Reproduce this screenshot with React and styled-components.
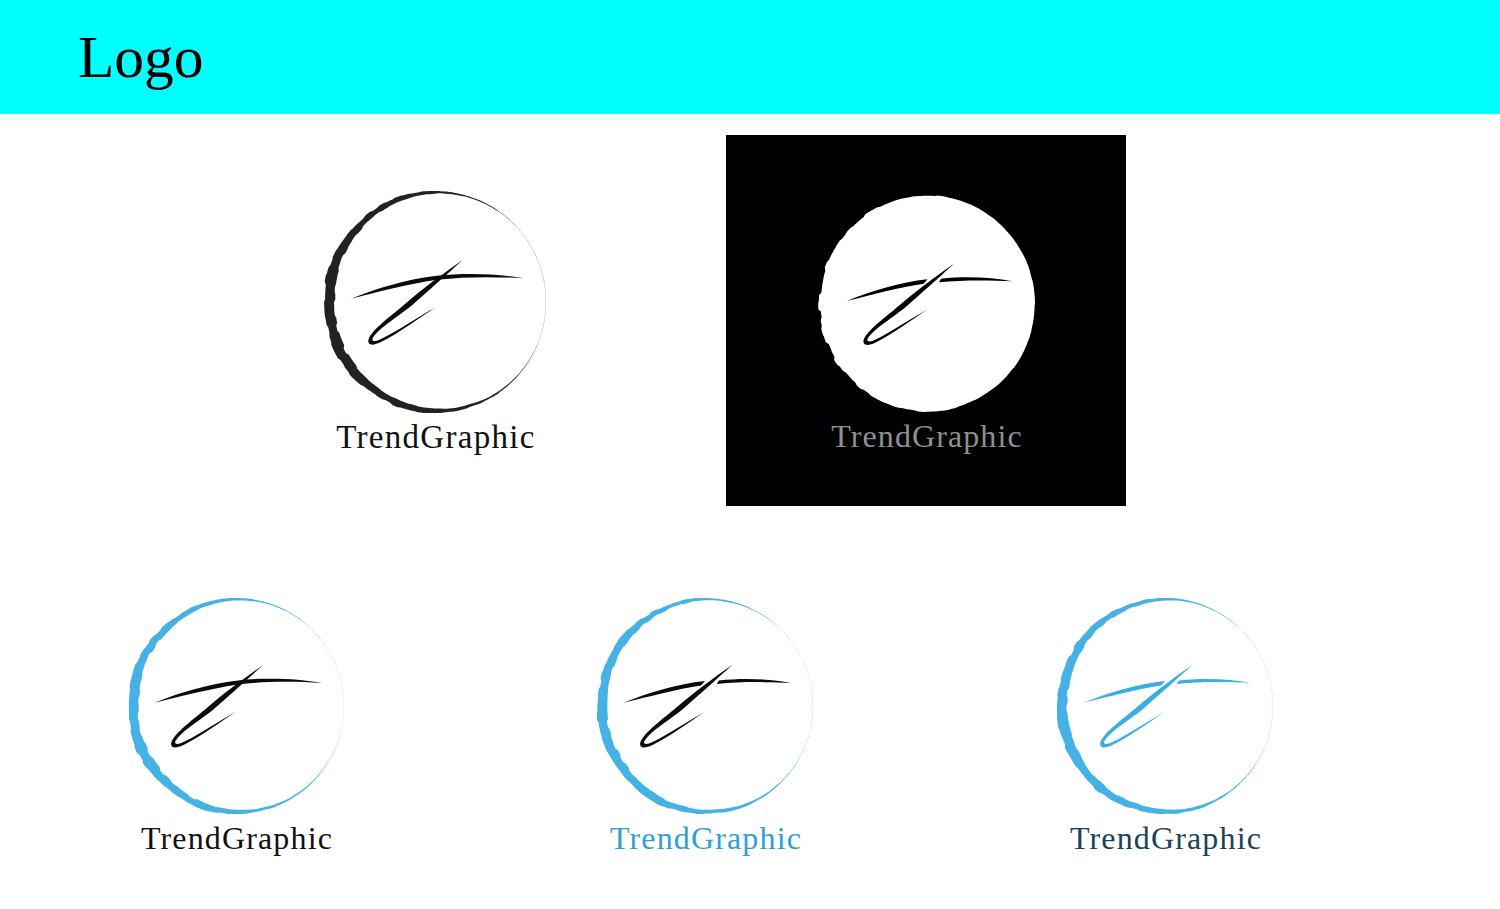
import React from 'react';
import styled, { createGlobalStyle } from 'styled-components';

const GlobalStyle = createGlobalStyle`
  html, body {
    margin: 0;
    padding: 0;
    background: #fff;
  }
`;

const Page = styled.div`
  width: 1500px;
  height: 909px;
  overflow: hidden;
  background: #fff;
`;

const Header = styled.header`
  height: 114px;
  padding-left: 78px;
  background: #00ffff;
  display: flex;
  align-items: center;
`;

const Title = styled.h1`
  margin: 2px 0 0;
  font-family: "Liberation Serif", serif;
  font-weight: 400;
  font-size: 59.5px;
  line-height: 1;
  color: #000;
`;

const TopRow = styled.section`
  display: flex;
  align-items: flex-start;
  padding: 21px 0 0 324px;
`;

const BlackPanel = styled.div`
  width: 400px;
  height: 371px;
  margin-left: 180px;
  padding-top: 60px;
  box-sizing: border-box;
  background: #000;
  display: flex;
  justify-content: center;
`;

const TopLogo = styled.div`
  padding-top: 56px;
`;

const BottomRow = styled.section`
  display: grid;
  grid-template-columns: 469px 460px 216px;
  padding: 92px 0 0 128px;
`;

const LogoBlock = styled.div`
  width: ${(p) => p.$size}px;
  display: flex;
  flex-direction: column;
  align-items: center;
`;

const MarkSvg = styled.svg`
  display: block;
  width: ${(p) => p.$size}px;
  height: ${(p) => p.$size}px;
`;

const Wordmark = styled.div`
  margin: 4px 0 0 2px;
  font-family: "Liberation Serif", serif;
  font-size: ${(p) => p.$fontSize}px;
  letter-spacing: ${(p) => p.$spacing}px;
  line-height: 40px;
  white-space: nowrap;
  color: ${(p) => p.$color};
`;

// rough edge noise, same every render
const wobble = (i, seed) => {
  const a = Math.sin(i * 12.9898 + seed * 78.233) * 43758.5453;
  return a - Math.floor(a);
};

const ringPath = (seed) => {
  const cx = 113;
  const cy = 112.5;
  const R = 110;
  const outer = [];
  const inner = [];
  for (let i = 0; i < 240; i++) {
    const t = (i / 240) * Math.PI * 2;
    // 190deg = thickest side, left and a bit down
    const d = t - (190 * Math.PI) / 180;
    const c = (1 + Math.cos(d)) / 2;
    const f = Math.pow(c, 1.6) * (c < 0.2 ? c / 0.2 : 1);
    const thick = 0.15 + 10 * f;
    const rough = f * 2.2;
    // noise picked every third step so the edge chips stay a few px long
    const step = Math.floor(i / 3);
    const lump = Math.sin(t * 7 + seed) * f * 0.8;
    const ro = R + (wobble(step, seed) - 0.5) * rough + lump;
    const ri = R - thick + (wobble(step + 300, seed) - 0.5) * rough + lump * 0.5;
    // screen y goes down, so flip sin to keep the angle counter-clockwise
    outer.push(`${(cx + ro * Math.cos(t)).toFixed(2)} ${(cy - ro * Math.sin(t)).toFixed(2)}`);
    inner.push(`${(cx + ri * Math.cos(t)).toFixed(2)} ${(cy - ri * Math.sin(t)).toFixed(2)}`);
  }
  return `M${outer.join('L')}ZM${inner.reverse().join('L')}Z`;
};

const discPath = (seed) => {
  const pts = [];
  for (let i = 0; i < 240; i++) {
    const t = (i / 240) * Math.PI * 2;
    const d = t - (190 * Math.PI) / 180;
    const f = Math.pow((1 + Math.cos(d)) / 2, 2);
    const r = 112 - wobble(Math.floor(i / 3), seed) * (0.4 + f * 2.8);
    pts.push(`${(112 + r * Math.cos(t)).toFixed(2)} ${(112 - r * Math.sin(t)).toFixed(2)}`);
  }
  return `M${pts.join('L')}Z`;
};

const BAR_FULL =
  'M29.7 109.3C55 99 85 90 115 86.5C140 83.5 175 84 200.7 89C175 87.5 145 87 115 90.5C85 95 55 103 29.7 109.3Z';
const BAR_LEFT =
  'M29.7 109.3C55 99 85 90 113 87L109 91.5C85 95 55 103 29.7 109.3Z';
const BAR_RIGHT =
  'M127 86.5C150 84 178 84.5 200.7 89C178 88 150 87.5 125 90Z';
const LOOP =
  'M140.7 70.7C120 85 100 100 85 113C70 126 50 140 47 150C46 156 52 156 60 152C78 143 95 130 113 118.3C95 128 75 142 60 149C54 152 50.5 152 51 149C55 140 75 128 90 116C105 103 125 85 140.7 70.7Z';

const Mark = ({ size, ringColor, strokeColor, gap, disc, seed }) => (
  <MarkSvg $size={size} viewBox={disc ? '0 0 224 224' : '3 2.5 220 220'} aria-hidden="true">
    {disc ? (
      <path d={discPath(seed)} fill="#fff" />
    ) : (
      <path d={ringPath(seed)} fill={ringColor} fillRule="evenodd" />
    )}
    {gap ? (
      <>
        <path d={BAR_LEFT} fill={strokeColor} />
        <path d={BAR_RIGHT} fill={strokeColor} />
      </>
    ) : (
      <path d={BAR_FULL} fill={strokeColor} />
    )}
    <path d={LOOP} fill={strokeColor} />
  </MarkSvg>
);

const Logo = ({ size, fontSize, spacing, textColor, ...mark }) => (
  <LogoBlock $size={size}>
    <Mark size={size} {...mark} />
    <Wordmark $fontSize={fontSize} $spacing={spacing} $color={textColor}>
      TrendGraphic
    </Wordmark>
  </LogoBlock>
);

const BLUE = '#45b1e4';

const bottomLogos = [
  { ringColor: BLUE, strokeColor: '#0b0b0b', textColor: '#111', gap: false, seed: 2 },
  { ringColor: BLUE, strokeColor: '#0b0b0b', textColor: '#2f9fd6', gap: true, seed: 3 },
  { ringColor: BLUE, strokeColor: '#3aaee2', textColor: '#1b4258', gap: true, seed: 4 },
];

const App = () => (
  <Page>
    <GlobalStyle />
    <Header>
      <Title>Logo</Title>
    </Header>
    <TopRow>
      <TopLogo>
        <Logo
          size={222}
          fontSize={33}
          spacing={1.3}
          ringColor="#222"
          strokeColor="#0b0b0b"
          textColor="#111"
          seed={1}
        />
      </TopLogo>
      <BlackPanel>
        <Logo
          size={217}
          fontSize={32}
          spacing={1.1}
          disc
          gap
          strokeColor="#000"
          textColor="#909090"
          seed={5}
        />
      </BlackPanel>
    </TopRow>
    <BottomRow>
      {bottomLogos.map((logo) => (
        <Logo key={logo.seed} size={216} fontSize={32} spacing={1.15} {...logo} />
      ))}
    </BottomRow>
  </Page>
);

export default App;
